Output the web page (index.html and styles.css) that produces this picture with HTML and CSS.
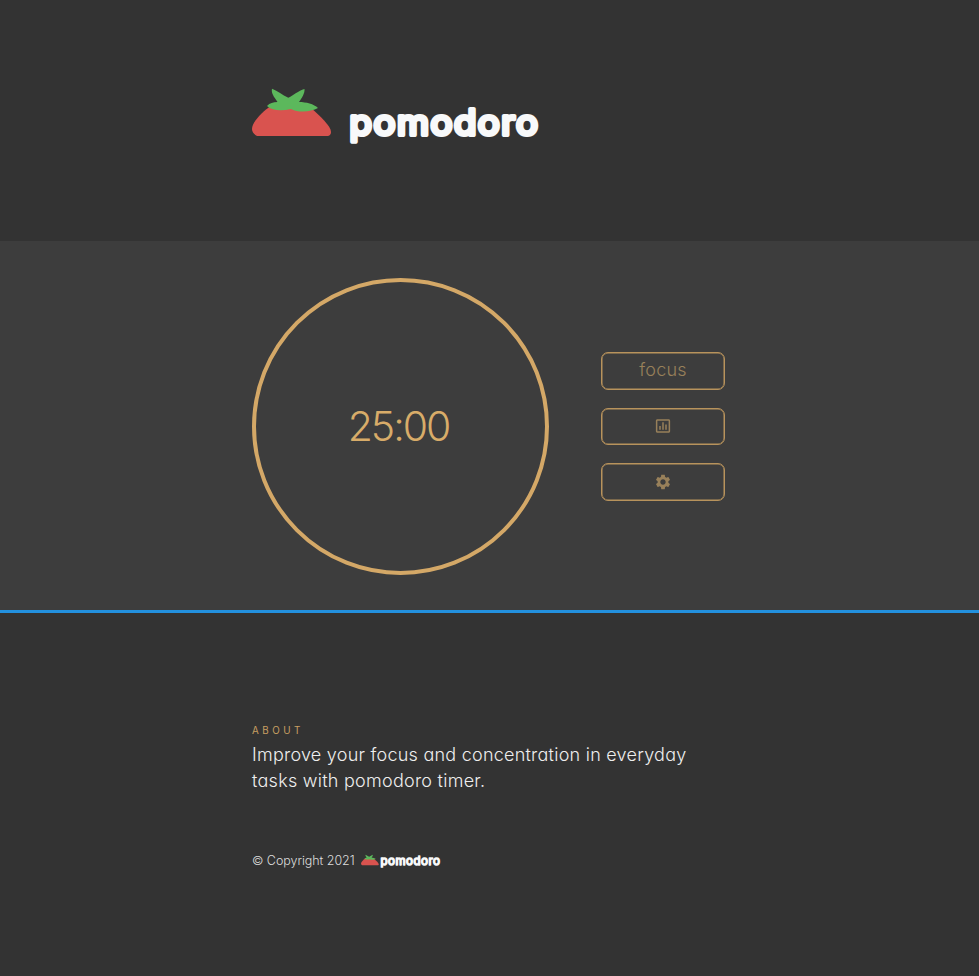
FILE: index.html
```html
<!DOCTYPE html>
<html lang="en">
<head>
<meta charset="utf-8">
<title>pomodoro</title>
<link rel="stylesheet" href="styles.css">
</head>
<body>
<svg class="defs" width="0" height="0" aria-hidden="true">
  <symbol id="tomato" viewBox="0 0 80 49">
    <path fill="#d9534f" d="M19 18C11 23 0 34 0 41Q0 45 5 48H76Q79 47 79 44C79 38 68 28 59 20Z"/>
    <path fill="#5cb85c" d="M20 .8C26 3 30 7 36.300 9.700C42 7 46 3 52.500 1C53 5 50 10 47 14C54 14 62 16 66 20C59 24 47 25 39 21C30 23 20 23 15 18C18 15 21 14 25.500 14C22 9 19 5 20 .8Z"/>
  </symbol>
</svg>
<header class="header">
  <div class="container brand">
    <svg class="tomato"><use href="#tomato"/></svg>
    <svg class="wordmark" viewBox="0 0 196 46"><text x="1.500" y="33.500" textLength="190" lengthAdjust="spacingAndGlyphs">pomodoro</text></svg>
  </div>
</header>
<main class="main">
  <div class="container timer">
    <div class="dial"><span class="time">25:00</span></div>
    <div class="actions">
      <button class="btn"><span class="label">focus</span></button>
      <button class="btn" aria-label="Statistics"><svg class="icon" viewBox="0 0 24 24"><path d="M9 17H7v-5h2v5zm4 0h-2V7h2v10zm4 0h-2v-7h2v7zm2.500 2.100h-15V5h15v14.100zm0-16.100h-15c-1.100 0-2 .9-2 2v14c0 1.100.9 2 2 2h15c1.100 0 2-.9 2-2V5c0-1.100-.9-2-2-2z"/></svg></button>
      <button class="btn" aria-label="Settings"><svg class="icon" viewBox="0 0 24 24"><path d="M19.140 12.940c.04-.3.060-.61.060-.94 0-.32-.02-.64-.07-.94l2.030-1.580c.18-.14.230-.41.120-.61l-1.920-3.320c-.12-.22-.37-.29-.59-.22l-2.390.96c-.5-.38-1.030-.7-1.620-.94l-.36-2.540c-.04-.24-.24-.41-.48-.41h-3.840c-.24 0-.43.17-.47.41l-.36 2.540c-.59.24-1.130.57-1.620.94l-2.390-.96c-.22-.08-.47 0-.59.22L2.740 8.870c-.12.21-.08.47.12.61l2.030 1.580c-.05.3-.09.63-.09.94s.02.64.07.94l-2.030 1.580c-.18.14-.23.41-.12.61l1.920 3.320c.12.22.37.29.59.22l2.390-.96c.5.38 1.030.7 1.620.94l.36 2.540c.05.24.24.41.48.41h3.840c.24 0 .44-.17.47-.41l.36-2.540c.59-.24 1.130-.56 1.620-.94l2.390.96c.22.08.47 0 .59-.22l1.920-3.320c.12-.22.070-.47-.12-.61l-2.010-1.580zM12 15.600c-1.980 0-3.600-1.620-3.600-3.600s1.620-3.600 3.600-3.600 3.600 1.620 3.600 3.600-1.620 3.600-3.600 3.600z"/></svg></button>
    </div>
  </div>
</main>
<footer class="footer">
  <div class="container">
    <h2 class="eyebrow">ABOUT</h2>
    <p class="about"><span class="line-one">Improve your focus and concentration in everyday</span><br><span class="line-two">tasks with pomodoro timer.</span></p>
    <div class="copyright"><span class="copy-text">© Copyright 2021</span><svg class="tomato-small"><use href="#tomato"/></svg><svg class="wordmark-small" viewBox="0 0 196 46"><text x="1.500" y="33.500" textLength="190" lengthAdjust="spacingAndGlyphs">pomodoro</text></svg></div>
  </div>
</footer>
</body>
</html>
```

FILE: styles.css
```css
* { box-sizing: border-box; }
body {
  margin: 0;
  background: #333;
  color: #f8f9fa;
  font-family: Inter, "Open Sans", sans-serif;
  font-weight: 300;
  font-feature-settings: "cv11", "ss03";
}
.defs { display: block; }
.container { width: 475px; margin: 0 auto; }
.header { height: 241px; padding-top: 88px; }
.brand { display: flex; align-items: flex-start; }
.tomato { width: 80px; height: 49px; flex: none; }
.wordmark {
  width: 196px;
  height: 46px;
  margin: 13px 0 0 16px;
  overflow: visible;
}
.wordmark text, .wordmark-small text {
  font-size: 35px;
  font-weight: 400;
  letter-spacing: 1.500px;
  fill: #f8f9fa;
  stroke: #f8f9fa;
  stroke-width: 4.200px;
  stroke-linejoin: round;
}
.main {
  height: 372px;
  padding-top: 37px;
  background: #3d3d3d;
  border-bottom: 3px solid #2391df;
}
.timer { display: flex; align-items: center; justify-content: space-between; }
.dial {
  width: 297px;
  height: 297px;
  border: 4px solid #d4a867;
  border-radius: 50%;
  display: flex;
  align-items: center;
  justify-content: center;
  color: #d8ac69;
}
.time { font-size: 41px; font-weight: 300; line-height: 48px; letter-spacing: -2px; margin: -2px 0 0 -4px; }
.actions { display: flex; flex-direction: column; gap: 18px; margin: 0 2px 0 0; }
.btn {
  width: 124px;
  height: 37.700px;
  padding: 0;
  display: flex;
  align-items: center;
  justify-content: center;
  background: transparent;
  border: 1px solid #b8935c;
  box-shadow: inset 0 0 0 0.5px #b8935c;
  border-radius: 7px;
  color: #98805a;
  font: inherit;
}
.label { font-size: 18px; line-height: 22px; letter-spacing: 0.2px; margin-top: -2px; }
.icon { width: 18px; height: 18px; margin-top: -1px; fill: currentColor; }
.footer { padding-top: 112px; }
.eyebrow {
  margin: 0;
  font-size: 9.800px;
  line-height: 12px;
  font-weight: 400;
  letter-spacing: 3.500px;
  color: #c89f62;
}
.about { margin: 5px 0 0; font-size: 18px; line-height: 26px; white-space: nowrap; color: #eee; }
.line-one { letter-spacing: 0.240px; }
.line-two { letter-spacing: 0.260px; }
.copyright { margin-top: 57px; display: flex; align-items: center; height: 18px; font-size: 12.500px; color: #ddd; }
.copy-text { letter-spacing: -0.050px; }
.tomato-small { width: 18px; height: 12px; margin-left: 6px; }
.wordmark-small { width: 62px; height: 14.500px; margin: 2px 0 0 1px; overflow: visible; }
```
